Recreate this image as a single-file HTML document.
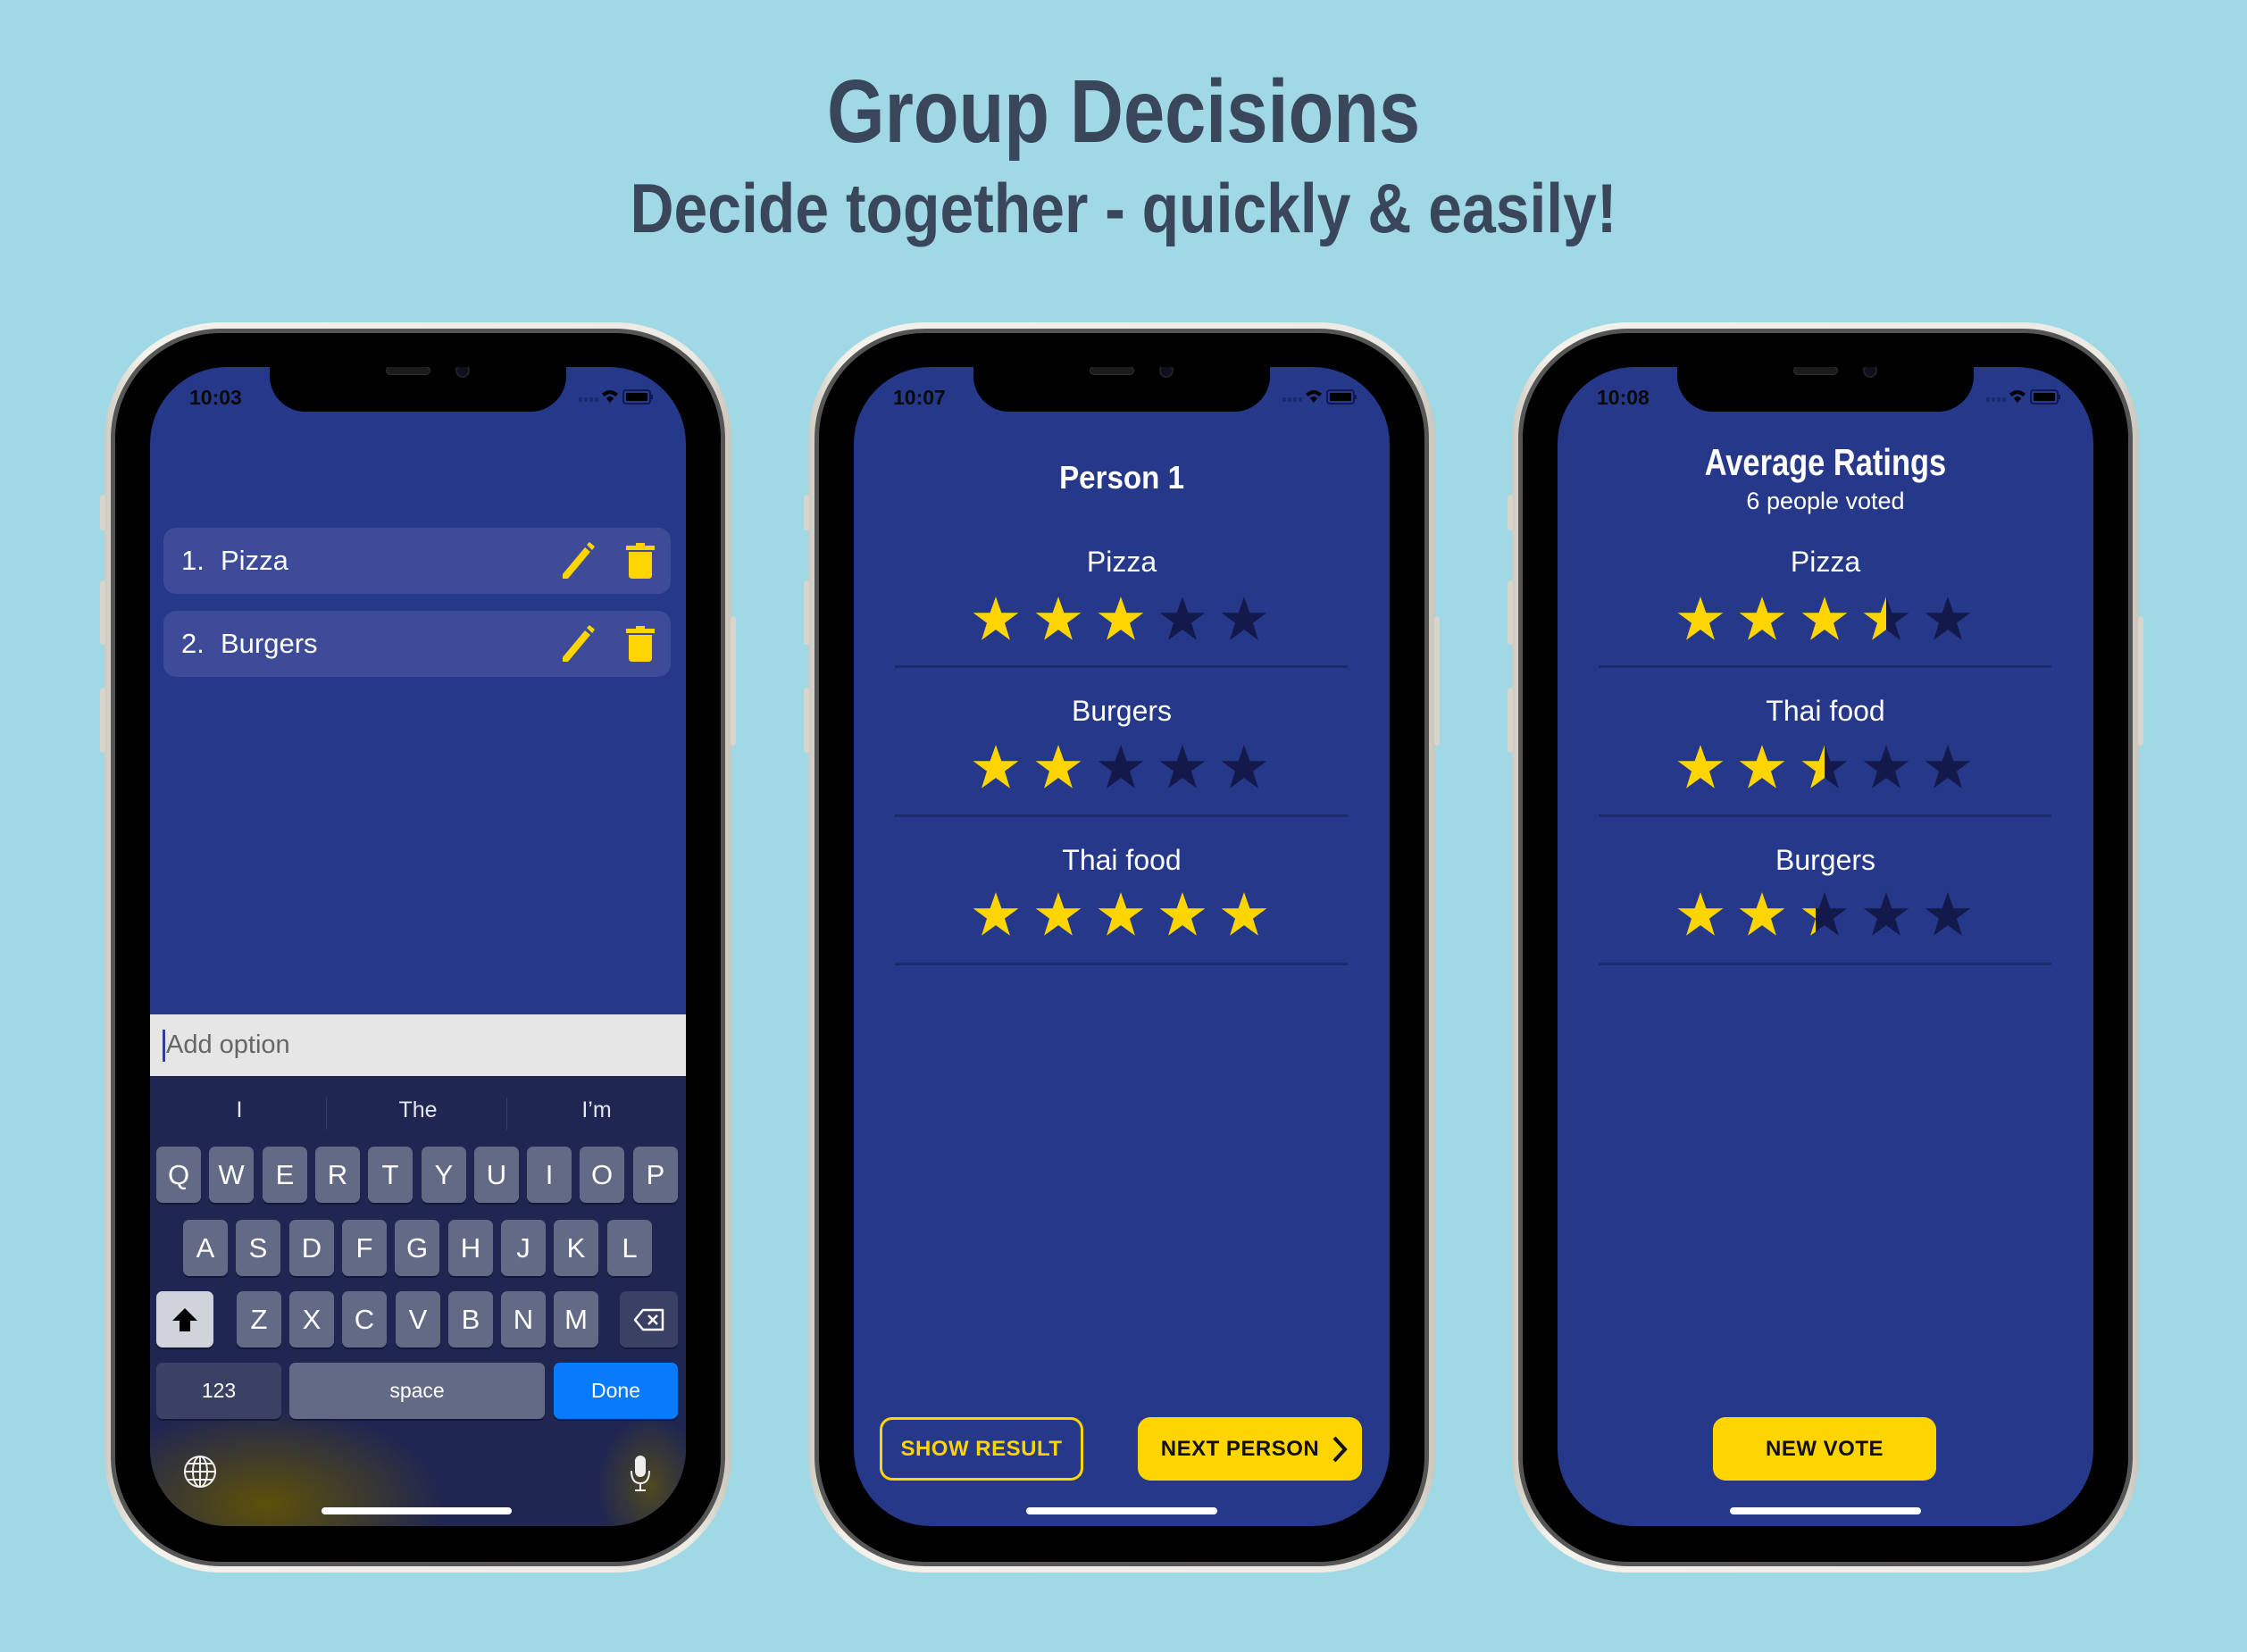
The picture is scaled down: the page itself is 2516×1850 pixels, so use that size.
<!DOCTYPE html>
<html><head><meta charset="utf-8">
<style>
*{margin:0;padding:0;box-sizing:border-box}
body{width:2516px;height:1850px;background:#a0d8e6;position:relative;overflow:hidden;font-family:"Liberation Sans",sans-serif}
.abs{position:absolute}
.title{position:absolute;left:0;width:2516px;text-align:center;color:#3a465a;font-weight:bold;line-height:1;white-space:nowrap}
.title span{display:inline-block}
.phone{position:absolute;top:361px;width:702px;height:1400px;border-radius:130px;background:linear-gradient(90deg,#cfccc3,#f3f1ea 6%,#eceae3 94%,#c9c6bd)}
.ring{position:absolute;left:7px;top:7px;right:7px;bottom:7px;border-radius:123px;background:#555}
.bez{position:absolute;left:12px;top:12px;right:12px;bottom:12px;border-radius:118px;background:#000}
.scr{position:absolute;left:51px;top:50px;width:600px;height:1298px;border-radius:86px;background:#253889;overflow:hidden}
.notch{position:absolute;left:134px;top:0;width:332px;height:50px;background:#000;border-radius:0 0 40px 40px}
.spk{position:absolute;left:130px;top:-1px;width:50px;height:10px;border-radius:5px;background:#1b1b1b;border:1px solid #333}
.cam{position:absolute;left:208px;top:-4px;width:16px;height:16px;border-radius:50%;background:#0d1020;border:2px solid #222}
.time{position:absolute;left:44px;top:21px;font-size:23px;font-weight:600;color:#0a0a0a;line-height:26px}
.sb{position:absolute;left:480px;top:22px}
.btn-side{position:absolute;background:#d8d5cc;border-radius:3px}
.row{position:absolute;left:15px;width:568px;height:74px;border-radius:14px;background:#3d4b98;color:#fff;font-size:31px;line-height:74px;padding-left:20px}
.row b{font-weight:normal;display:inline-block;width:44px}
.key{position:absolute;width:50px;height:63px;border-radius:7px;background:#626a86;color:#fff;font-size:31px;line-height:63px;text-align:center;box-shadow:0 2px 0 #141838}
.lbl{position:absolute;left:0;width:600px;text-align:center;color:#fff;line-height:1;white-space:nowrap}
.st{position:absolute;width:54px;height:54px}
.div{position:absolute;left:46px;width:507px;height:3px;background:#1b2a6c}
.home{position:absolute;left:193px;top:1277px;width:214px;height:8px;border-radius:4px;background:#fff}
.yb{position:absolute;top:1176px;height:71px;border-radius:14px;font-weight:bold;font-size:24px;line-height:71px;text-align:center;letter-spacing:0.5px}
</style></head><body>

<svg width="0" height="0" style="position:absolute">
<defs>
<symbol id="star" viewBox="0 0 100 100"><polygon points="50,4 61.8,37.5 97,37.5 68.5,58.5 79.5,94 50,72.5 20.5,94 31.5,58.5 3,37.5 38.2,37.5"/></symbol>
<linearGradient id="h50" x1="0" x2="1" y1="0" y2="0"><stop offset="0.5" stop-color="#ffd500"/><stop offset="0.5" stop-color="#131a4b"/></linearGradient>
<linearGradient id="h30" x1="0" x2="1" y1="0" y2="0"><stop offset="0.3" stop-color="#ffd500"/><stop offset="0.3" stop-color="#131a4b"/></linearGradient>
</defs></svg>

<div class="title" style="top:75px;font-size:100px"><span style="transform:scaleX(0.83)">Group Decisions</span></div>
<div class="title" style="top:194px;font-size:78px"><span style="transform:scaleX(0.87)">Decide together - quickly &amp; easily!</span></div>

<!-- PHONE 1 -->
<div class="phone" style="left:117px">
 <div class="btn-side" style="left:-5px;top:193px;width:6px;height:40px"></div>
 <div class="btn-side" style="left:-5px;top:289px;width:6px;height:72px"></div>
 <div class="btn-side" style="left:-5px;top:409px;width:6px;height:73px"></div>
 <div class="btn-side" style="right:-5px;top:329px;width:6px;height:145px"></div>
 <div class="ring"></div><div class="bez"></div>
 <div class="scr">
  <div class="time">10:03</div>
  <svg class="sb" width="90" height="26" viewBox="0 0 90 26"><g fill="#1a2a70"><rect x="0" y="12" width="4" height="5"/><rect x="6" y="12" width="4" height="5"/><rect x="12" y="12" width="4" height="5"/><rect x="18" y="12" width="4" height="5"/></g><path d="M26 8 Q35 0 44 8 L41 11 Q35 5 29 11Z M31 13 Q35 9 39 13 L35 18Z" fill="#000"/><rect x="50" y="4" width="30" height="15" rx="3" fill="none" stroke="#0f1a55" stroke-width="2"/><rect x="53" y="7" width="24" height="9" rx="1" fill="#000"/><rect x="81" y="9" width="2" height="5" fill="#0f1a55"/></svg>
  <div class="notch"><div class="spk"></div><div class="cam"></div></div>
  <div class="row" style="top:180px"><b>1.</b>Pizza</div>
  <div class="row" style="top:273px"><b>2.</b>Burgers</div>
  <svg class="abs" style="left:460px;top:196px" width="40" height="42" viewBox="0 0 40 42"><path d="M2 36 L27 6 L33 11 L8 41 L2 41Z M29 3 L32 0 L38 5 L35 9Z" fill="#ffd500"/></svg>
  <svg class="abs" style="left:533px;top:197px" width="32" height="40" viewBox="0 0 32 40"><rect x="0" y="3" width="32" height="5" fill="#ffd500"/><rect x="11" y="0" width="10" height="4" fill="#ffd500"/><path d="M3 10 H29 V36 Q29 40 25 40 H7 Q3 40 3 36Z" fill="#ffd500"/></svg>
  <svg class="abs" style="left:460px;top:289px" width="40" height="42" viewBox="0 0 40 42"><path d="M2 36 L27 6 L33 11 L8 41 L2 41Z M29 3 L32 0 L38 5 L35 9Z" fill="#ffd500"/></svg>
  <svg class="abs" style="left:533px;top:290px" width="32" height="40" viewBox="0 0 32 40"><rect x="0" y="3" width="32" height="5" fill="#ffd500"/><rect x="11" y="0" width="10" height="4" fill="#ffd500"/><path d="M3 10 H29 V36 Q29 40 25 40 H7 Q3 40 3 36Z" fill="#ffd500"/></svg>
  <div class="abs" style="left:0;top:725px;width:600px;height:69px;background:#e6e6e6;color:#666;font-size:29px;line-height:69px;padding-left:14px"><span style="display:inline-block;width:3px;height:36px;background:#2f3fa0;vertical-align:middle;margin-right:1px"></span>Add option</div>
  <div class="abs" style="left:0;top:794px;width:600px;height:504px;background:radial-gradient(ellipse 200px 110px at 130px 480px,rgba(100,85,0,0.9),rgba(100,85,0,0) 100%),radial-gradient(ellipse 60px 80px at 560px 460px,rgba(110,95,0,0.6),rgba(110,95,0,0) 100%),#1f2651"></div>
  <div class="abs" style="left:197px;top:818px;width:1px;height:36px;background:#343b66"></div>
  <div class="abs" style="left:399px;top:818px;width:1px;height:36px;background:#343b66"></div>
  <div class="lbl" style="top:820px;font-size:25px;width:200px;color:#e6e6ee">I</div>
  <div class="lbl" style="top:820px;font-size:25px;left:200px;width:200px;color:#e6e6ee">The</div>
  <div class="lbl" style="top:820px;font-size:25px;left:400px;width:200px;color:#e6e6ee">I’m</div>
  <div class="key" style="left:7px;top:873px">Q</div><div class="key" style="left:66px;top:873px">W</div><div class="key" style="left:126px;top:873px">E</div><div class="key" style="left:185px;top:873px">R</div><div class="key" style="left:244px;top:873px">T</div><div class="key" style="left:304px;top:873px">Y</div><div class="key" style="left:363px;top:873px">U</div><div class="key" style="left:422px;top:873px">I</div><div class="key" style="left:481px;top:873px">O</div><div class="key" style="left:541px;top:873px">P</div>
  <div class="key" style="left:37px;top:955px">A</div><div class="key" style="left:96px;top:955px">S</div><div class="key" style="left:156px;top:955px">D</div><div class="key" style="left:215px;top:955px">F</div><div class="key" style="left:274px;top:955px">G</div><div class="key" style="left:334px;top:955px">H</div><div class="key" style="left:393px;top:955px">J</div><div class="key" style="left:452px;top:955px">K</div><div class="key" style="left:512px;top:955px">L</div>
  <div class="key" style="left:7px;top:1035px;width:64px;background:#d0d3dc"><svg width="32" height="30" viewBox="0 0 32 30" style="margin-top:17px"><path d="M16 2 L30 16 H22 V28 H10 V16 H2Z" fill="#000"/></svg></div>
  <div class="key" style="left:97px;top:1035px">Z</div><div class="key" style="left:156px;top:1035px">X</div><div class="key" style="left:215px;top:1035px">C</div><div class="key" style="left:275px;top:1035px">V</div><div class="key" style="left:334px;top:1035px">B</div><div class="key" style="left:393px;top:1035px">N</div><div class="key" style="left:452px;top:1035px">M</div>
  <div class="key" style="left:526px;top:1035px;width:65px;background:#3b4165"><svg width="36" height="26" viewBox="0 0 36 26" style="margin-top:19px"><path d="M11 2 H33 V24 H11 L2 13Z" fill="none" stroke="#fff" stroke-width="2.5" stroke-linejoin="round"/><path d="M17 8 L27 18 M27 8 L17 18" stroke="#fff" stroke-width="2.5"/></svg></div>
  <div class="key" style="left:7px;top:1115px;width:140px;background:#3b4165;font-size:23px">123</div>
  <div class="key" style="left:156px;top:1115px;width:286px;font-size:23px">space</div>
  <div class="key" style="left:452px;top:1115px;width:139px;background:#087bfd;font-size:23px">Done</div>
  <svg class="abs" style="left:37px;top:1218px" width="38" height="38" viewBox="0 0 38 38" fill="none" stroke="#eee" stroke-width="2"><circle cx="19" cy="19" r="17"/><ellipse cx="19" cy="19" rx="8" ry="17"/><path d="M19 2 V36 M2 19 H36 M5 10 H33 M5 28 H33"/></svg>
  <svg class="abs" style="left:537px;top:1218px" width="24" height="42" viewBox="0 0 24 42"><rect x="6" y="1" width="12" height="24" rx="6" fill="#eee"/><path d="M2 18 Q2 32 12 32 Q22 32 22 18 M12 32 V39 M6 40 H18" fill="none" stroke="#eee" stroke-width="2"/></svg>
  <div class="home" style="left:192px;width:213px"></div>
 </div>
</div>

<!-- PHONE 2 -->
<div class="phone" style="left:905px">
 <div class="btn-side" style="left:-5px;top:193px;width:6px;height:40px"></div>
 <div class="btn-side" style="left:-5px;top:289px;width:6px;height:72px"></div>
 <div class="btn-side" style="left:-5px;top:409px;width:6px;height:73px"></div>
 <div class="btn-side" style="right:-5px;top:329px;width:6px;height:145px"></div>
 <div class="ring"></div><div class="bez"></div>
 <div class="scr">
  <div class="time">10:07</div>
  <svg class="sb" width="90" height="26" viewBox="0 0 90 26"><g fill="#1a2a70"><rect x="0" y="12" width="4" height="5"/><rect x="6" y="12" width="4" height="5"/><rect x="12" y="12" width="4" height="5"/><rect x="18" y="12" width="4" height="5"/></g><path d="M26 8 Q35 0 44 8 L41 11 Q35 5 29 11Z M31 13 Q35 9 39 13 L35 18Z" fill="#000"/><rect x="50" y="4" width="30" height="15" rx="3" fill="none" stroke="#0f1a55" stroke-width="2"/><rect x="53" y="7" width="24" height="9" rx="1" fill="#000"/><rect x="81" y="9" width="2" height="5" fill="#0f1a55"/></svg>
  <div class="notch"><div class="spk"></div><div class="cam"></div></div>
  <div class="lbl" style="top:106px;font-size:36px;font-weight:bold"><span style="display:inline-block;transform:scaleX(0.92)">Person 1</span></div>
  <div class="lbl" style="top:202px;font-size:32px">Pizza</div>
  <div class="lbl" style="top:369px;font-size:32px">Burgers</div>
  <div class="lbl" style="top:536px;font-size:32px">Thai food</div>
  <svg class="st" style="left:132px;top:255px"><use href="#star" fill="#ffd500"/></svg>
  <svg class="st" style="left:202px;top:255px"><use href="#star" fill="#ffd500"/></svg>
  <svg class="st" style="left:272px;top:255px"><use href="#star" fill="#ffd500"/></svg>
  <svg class="st" style="left:341px;top:255px"><use href="#star" fill="#131a4b"/></svg>
  <svg class="st" style="left:410px;top:255px"><use href="#star" fill="#131a4b"/></svg>
  <div class="div" style="top:334px"></div>
  <svg class="st" style="left:132px;top:421px"><use href="#star" fill="#ffd500"/></svg>
  <svg class="st" style="left:202px;top:421px"><use href="#star" fill="#ffd500"/></svg>
  <svg class="st" style="left:272px;top:421px"><use href="#star" fill="#131a4b"/></svg>
  <svg class="st" style="left:341px;top:421px"><use href="#star" fill="#131a4b"/></svg>
  <svg class="st" style="left:410px;top:421px"><use href="#star" fill="#131a4b"/></svg>
  <div class="div" style="top:501px"></div>
  <svg class="st" style="left:132px;top:586px"><use href="#star" fill="#ffd500"/></svg>
  <svg class="st" style="left:202px;top:586px"><use href="#star" fill="#ffd500"/></svg>
  <svg class="st" style="left:272px;top:586px"><use href="#star" fill="#ffd500"/></svg>
  <svg class="st" style="left:341px;top:586px"><use href="#star" fill="#ffd500"/></svg>
  <svg class="st" style="left:410px;top:586px"><use href="#star" fill="#ffd500"/></svg>
  <div class="div" style="top:667px"></div>
  <div class="yb" style="left:29px;width:228px;border:3px solid #ffd500;color:#ffd500;line-height:65px">SHOW RESULT</div>
  <div class="yb" style="left:318px;width:251px;background:#ffd500;color:#111;padding-right:22px">NEXT PERSON<svg class="abs" style="right:16px;top:21px" width="18" height="30" viewBox="0 0 18 30"><path d="M3 2 L15 15 L3 28" fill="none" stroke="#111" stroke-width="4"/></svg></div>
  <div class="home"></div>
 </div>
</div>

<!-- PHONE 3 -->
<div class="phone" style="left:1693px">
 <div class="btn-side" style="left:-5px;top:193px;width:6px;height:40px"></div>
 <div class="btn-side" style="left:-5px;top:289px;width:6px;height:72px"></div>
 <div class="btn-side" style="left:-5px;top:409px;width:6px;height:73px"></div>
 <div class="btn-side" style="right:-5px;top:329px;width:6px;height:145px"></div>
 <div class="ring"></div><div class="bez"></div>
 <div class="scr">
  <div class="time">10:08</div>
  <svg class="sb" width="90" height="26" viewBox="0 0 90 26"><g fill="#1a2a70"><rect x="0" y="12" width="4" height="5"/><rect x="6" y="12" width="4" height="5"/><rect x="12" y="12" width="4" height="5"/><rect x="18" y="12" width="4" height="5"/></g><path d="M26 8 Q35 0 44 8 L41 11 Q35 5 29 11Z M31 13 Q35 9 39 13 L35 18Z" fill="#000"/><rect x="50" y="4" width="30" height="15" rx="3" fill="none" stroke="#0f1a55" stroke-width="2"/><rect x="53" y="7" width="24" height="9" rx="1" fill="#000"/><rect x="81" y="9" width="2" height="5" fill="#0f1a55"/></svg>
  <div class="notch"><div class="spk"></div><div class="cam"></div></div>
  <div class="lbl" style="top:86px;font-size:42px;font-weight:bold"><span style="display:inline-block;transform:scaleX(0.82)">Average Ratings</span></div>
  <div class="lbl" style="top:137px;font-size:27px">6 people voted</div>
  <div class="lbl" style="top:202px;font-size:32px">Pizza</div>
  <div class="lbl" style="top:369px;font-size:32px">Thai food</div>
  <div class="lbl" style="top:536px;font-size:32px">Burgers</div>
  <svg class="st" style="left:133px;top:255px"><use href="#star" fill="#ffd500"/></svg>
  <svg class="st" style="left:202px;top:255px"><use href="#star" fill="#ffd500"/></svg>
  <svg class="st" style="left:272px;top:255px"><use href="#star" fill="#ffd500"/></svg>
  <svg class="st" style="left:341px;top:255px"><use href="#star" fill="url(#h50)"/></svg>
  <svg class="st" style="left:410px;top:255px"><use href="#star" fill="#131a4b"/></svg>
  <div class="div" style="top:334px"></div>
  <svg class="st" style="left:133px;top:421px"><use href="#star" fill="#ffd500"/></svg>
  <svg class="st" style="left:202px;top:421px"><use href="#star" fill="#ffd500"/></svg>
  <svg class="st" style="left:272px;top:421px"><use href="#star" fill="url(#h50)"/></svg>
  <svg class="st" style="left:341px;top:421px"><use href="#star" fill="#131a4b"/></svg>
  <svg class="st" style="left:410px;top:421px"><use href="#star" fill="#131a4b"/></svg>
  <div class="div" style="top:501px"></div>
  <svg class="st" style="left:133px;top:586px"><use href="#star" fill="#ffd500"/></svg>
  <svg class="st" style="left:202px;top:586px"><use href="#star" fill="#ffd500"/></svg>
  <svg class="st" style="left:272px;top:586px"><use href="#star" fill="url(#h30)"/></svg>
  <svg class="st" style="left:341px;top:586px"><use href="#star" fill="#131a4b"/></svg>
  <svg class="st" style="left:410px;top:586px"><use href="#star" fill="#131a4b"/></svg>
  <div class="div" style="top:667px"></div>
  <div class="yb" style="left:174px;width:250px;background:#ffd500;color:#111">NEW VOTE</div>
  <div class="home"></div>
 </div>
</div>

</body></html>
